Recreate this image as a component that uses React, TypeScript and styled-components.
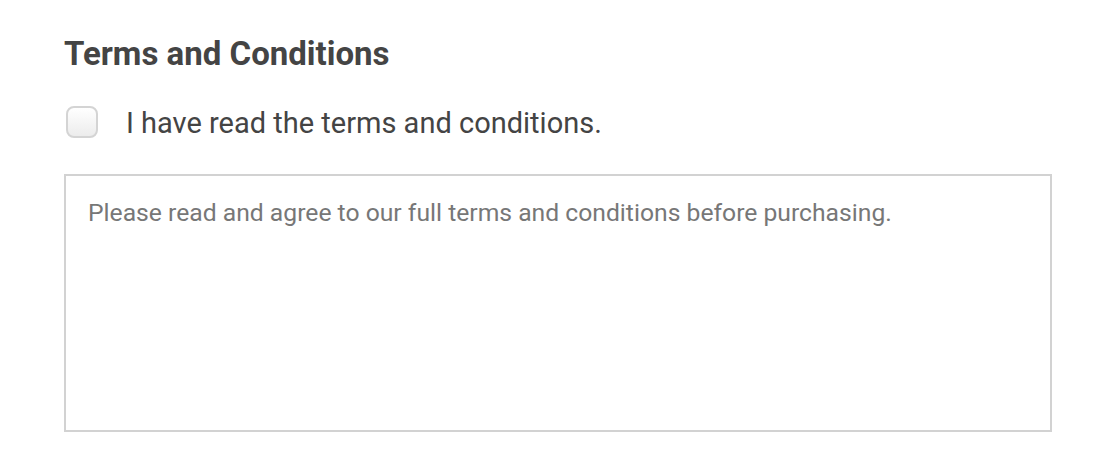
import styled, { createGlobalStyle } from 'styled-components';

const GlobalStyle = createGlobalStyle`
    body {
        margin: 0;
        background: #fff;
        font-family: Roboto, "Liberation Sans", sans-serif;
    }
`;

const Section = styled.section`
    padding: 34px 64px 0 64px;
    width: 988px;
`;

const Heading = styled.h2`
    margin: 0;
    font-size: 33px;
    font-weight: 700;
    color: #444;
    letter-spacing: 0;
    line-height: 40px;
`;

const CheckRow = styled.label`
    display: flex;
    align-items: center;
    gap: 28px;
    margin-top: 29px;
    padding-left: 2px;
    font-size: 29px;
    line-height: 34px;
    color: #444;
    cursor: pointer;
`;

const LabelText = styled.span`
    padding-top: 3px;
`;

const Box = styled.input`
    appearance: none;
    margin: 0;
    width: 32px;
    height: 32px;
    border: 2px solid #d4d4d4;
    border-radius: 8px;
    background: linear-gradient(#ffffff, #ececec);
    cursor: pointer;
`;

const Terms = styled.textarea`
    display: block;
    box-sizing: border-box;
    width: 988px;
    height: 258px;
    margin-top: 34px;
    padding: 22px 22px;
    border: 2px solid #d2d2d2;
    font-family: Roboto, "Liberation Sans", sans-serif;
    font-size: 24.7px;
    line-height: 30px;
    color: #777;
    resize: none;
    outline: none;
`;

function App() {
    return (
        <>
            <GlobalStyle />
            <Section>
                <Heading>Terms and Conditions</Heading>
                <CheckRow>
                    <Box type="checkbox" />
                    <LabelText>I have read the terms and conditions.</LabelText>
                </CheckRow>
                <Terms
                    readOnly
                    defaultValue="Please read and agree to our full terms and conditions before purchasing."
                />
            </Section>
        </>
    );
}

export default App;
